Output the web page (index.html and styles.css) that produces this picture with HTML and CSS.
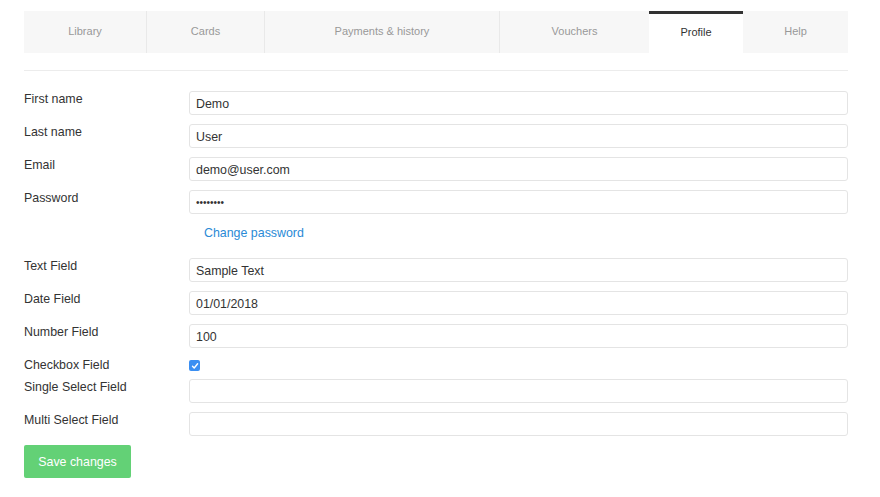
FILE: index.html
```html
<!DOCTYPE html>
<html lang="en">
<head>
    <meta charset="UTF-8">
    <meta name="viewport" content="width=device-width, initial-scale=1.0">
    <title>Profile</title>
    <link rel="stylesheet" href="styles.css">
</head>
<body>
    <div class="container">
        <nav class="tabs">
            <a class="tab">Library</a>
            <a class="tab">Cards</a>
            <a class="tab">Payments &amp; history</a>
            <a class="tab">Vouchers</a>
            <a class="tab active">Profile</a>
            <a class="tab">Help</a>
        </nav>
        <hr class="divider">
        <form class="profile-form">
            <div class="row">
                <label for="first-name">First name</label>
                <input type="text" id="first-name" value="Demo">
            </div>
            <div class="row">
                <label for="last-name">Last name</label>
                <input type="text" id="last-name" value="User">
            </div>
            <div class="row">
                <label for="email">Email</label>
                <input type="text" id="email" value="demo@user.com">
            </div>
            <div class="row">
                <label for="password">Password</label>
                <input type="password" id="password" value="password">
            </div>
            <div class="link-row">
                <a href="#" class="change-link">Change password</a>
            </div>
            <div class="row">
                <label for="text-field">Text Field</label>
                <input type="text" id="text-field" value="Sample Text">
            </div>
            <div class="row">
                <label for="date-field">Date Field</label>
                <input type="text" id="date-field" value="01/01/2018">
            </div>
            <div class="row">
                <label for="number-field">Number Field</label>
                <input type="text" id="number-field" value="100">
            </div>
            <div class="row check-row">
                <label for="checkbox-field">Checkbox Field</label>
                <span class="checkbox">
                    <svg width="8" height="8" viewBox="0 0 8 8"><path d="M1.5 4.3 L3.2 6 L6.6 1.8" fill="none" stroke="#fff" stroke-width="1.4" stroke-linecap="round" stroke-linejoin="round"/></svg>
                </span>
            </div>
            <div class="row">
                <label for="single-select">Single Select Field</label>
                <input type="text" id="single-select" value="">
            </div>
            <div class="row">
                <label for="multi-select">Multi Select Field</label>
                <input type="text" id="multi-select" value="">
            </div>
            <button type="button" class="save-button">Save changes</button>
        </form>
    </div>
</body>
</html>
```

FILE: styles.css
```css
body {
    font-family: "Liberation Sans", Arial, sans-serif;
    background-color: #ffffff;
    color: #333;
    margin: 0;
    padding: 0;
}

.container {
    padding: 11px 32px 0 24px;
}

.tabs {
    display: grid;
    grid-template-columns: 123px 118px 235px 149px 94px 105px;
    height: 42px;
    background-color: #f7f7f7;
}

.tab {
    display: flex;
    align-items: center;
    justify-content: center;
    padding-bottom: 2px;
    font-size: 11px;
    color: #999;
    text-decoration: none;
    border-right: 1px solid #e9e9e9;
}

.tab:nth-child(4),
.tab:last-child {
    border-right: none;
}

.tab.active {
    background-color: #fff;
    color: #333;
    border-top: 3px solid #333;
    border-right: none;
    padding-bottom: 4px;
}

.divider {
    border: none;
    border-top: 1px solid #ececec;
    margin: 17px 0 20px;
}

.profile-form {
    display: flex;
    flex-direction: column;
}

.row {
    display: flex;
    align-items: flex-start;
    margin-bottom: 9px;
}

.row label {
    width: 165px;
    flex-shrink: 0;
    padding-top: 1px;
    font-size: 12.4px;
    line-height: 14px;
    color: #333;
}

.row input {
    flex: 1;
    height: 24px;
    box-sizing: border-box;
    border: 1px solid #e4e4e4;
    border-radius: 3px;
    padding: 1px 6px 0;
    font-family: "Liberation Sans", Arial, sans-serif;
    font-size: 12.4px;
    color: #333;
    outline: none;
}

.row input[type="password"] {
    font-size: 10px;
}

.check-row {
    margin-bottom: 7px;
}

.checkbox {
    width: 11px;
    height: 11px;
    margin-top: 3px;
    border-radius: 2px;
    background-color: #3b8ff2;
    display: flex;
    align-items: center;
    justify-content: center;
}

.link-row {
    padding-left: 180px;
    margin: 1px 0 18px;
    padding-top: 1px;
    line-height: 14px;
}

.change-link {
    font-size: 12.4px;
    color: #2a8ad6;
    text-decoration: none;
}

.save-button {
    align-self: flex-start;
    width: 107px;
    height: 33px;
    border: none;
    border-radius: 2px;
    background-color: #63d176;
    color: #fff;
    font-family: "Liberation Sans", Arial, sans-serif;
    font-size: 12.4px;
    cursor: pointer;
}
```
